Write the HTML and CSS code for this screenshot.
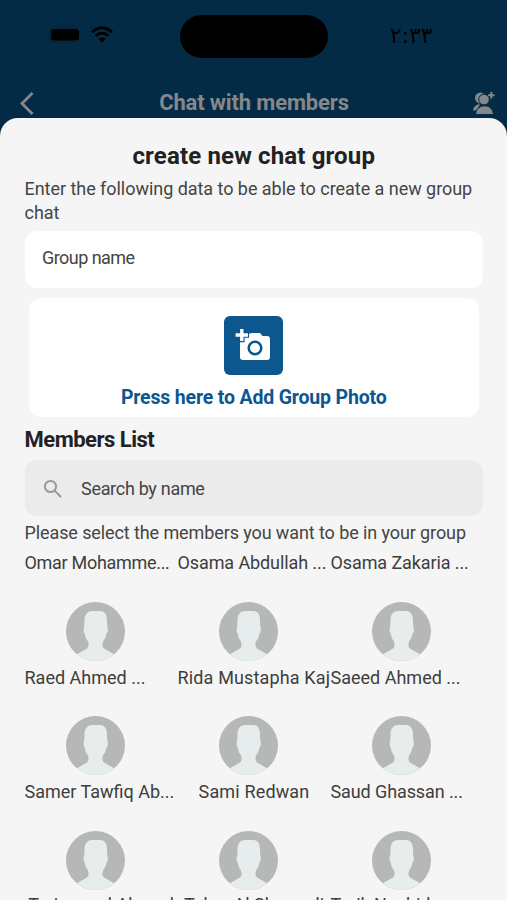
FILE: index.html
```html
<!DOCTYPE html>
<html lang="en">
<head>
<meta charset="utf-8">
<meta name="viewport" content="width=device-width, initial-scale=1">
<title>Create new chat group</title>
<link rel="stylesheet" href="styles.css">
</head>
<body>
<svg class="defs" width="0" height="0">
  <symbol id="avatar" viewBox="0 0 59 59">
    <circle cx="29.5" cy="29.5" r="29.5" fill="#b5b8b7"/>
    <path d="M11 52.300L21 46.500Q23.500 44.500 22 39.500Q19 36 18.700 31.500Q17.300 30.500 17.700 26Q18.500 25 18.500 18C18.500 12 22 9 26 9H34C38 9 41 12 41 18Q41 25 41.800 26Q42.200 30.500 40.500 31.500Q40 36 37 39.500Q35.500 44.500 38 46.500L48 52.300Q40 59 29.500 59T11 52.300Z" fill="#e7eded"/>
  </symbol>
</svg>
<div class="screen">
  <header class="top">
    <div class="status">
      <svg class="signals" width="110" height="24" viewBox="0 0 110 24">
        <rect x="3.500" y="3.500" width="31" height="17" rx="6" fill="#06243a"/>
        <rect x="6" y="6" width="28" height="11.500" rx="3.500" fill="#000"/>
        <path d="M1.300 10v4" stroke="#06243a" stroke-width="2"/>
        <g fill="none" stroke="#000" stroke-width="2.800">
          <path d="M47 9.300Q57 .300 67 9.300"/>
          <path d="M50.500 13Q57 7.200 63.500 13"/>
        </g>
        <path d="M53.200 15.800Q57 12.700 60.800 15.800L57 19.800Z" fill="#000"/>
        <path d="M78 17.500h28" stroke="#07223a" stroke-width="2" stroke-dasharray="3 4"/>
      </svg>
      <div class="island"></div>
      <div class="clock">٢:٣٣</div>
    </div>
    <div class="nav">
      <svg width="18" height="26" viewBox="0 0 18 26"><path d="M14.500 3L4 13.500 14.500 24" fill="none" stroke="#85888b" stroke-width="2.800"/></svg>
      <h1 class="nav-title">Chat with members</h1>
      <svg width="24" height="24" viewBox="0 0 24 24">
        <g fill="#85888b">
          <circle cx="8.500" cy="7" r="5.500"/>
          <path d="M1 19.500Q1.500 14 8 13L5 19.500Z"/>
          <circle cx="12" cy="8.500" r="5.300" stroke="#042b45" stroke-width="1"/>
          <path d="M3.500 23.500Q4.500 14.800 12.500 14.800T21.500 23.500Z" stroke="#042b45" stroke-width="1"/>
          <path d="M18.300 1h2v2.300h2.200v2h-2.200v2.300h-2V5.300h-2.200v-2h2.200z"/>
        </g>
      </svg>
    </div>
  </header>
  <main class="sheet">
    <h2 class="title">create new chat group</h2>
    <p class="intro">Enter the following data to be able to create a new group chat</p>
    <div class="field"><span class="field-text">Group name</span></div>
    <div class="photo">
      <div class="photo-button">
        <svg width="59" height="59" viewBox="0 0 59 59">
          <path d="M19 17.500H26L27.500 17H36L38.500 20H43Q46 20 46 23V41Q46 44 43 44H19Q16 44 16 41V19Z" fill="#fff"/>
          <path d="M15 11.700h5.600v4.500h4.500v5.600h-4.500v4.500H15v-4.500h-4.500v-5.600H15z" fill="#0b578e"/>
          <path d="M16.100 13h3.400v4.300H24v3.400h-4.500V25h-3.400v-4.300h-4.500v-3.400h4.500z" fill="#fff"/>
          <circle cx="31" cy="32" r="6.300" fill="#fff" stroke="#0b578e" stroke-width="2.500"/>
        </svg>
      </div>
      <span class="photo-label">Press here to Add Group Photo</span>
    </div>
    <h3 class="section">Members List</h3>
    <div class="search">
      <svg width="20" height="20" viewBox="0 0 20 20"><g fill="none" stroke="#999" stroke-width="2"><circle cx="7.500" cy="7.500" r="5.600"/><path d="M11.600 11.600L18 18"/></g></svg>
      <span class="search-text">Search by name</span>
    </div>
    <p class="hint">Please select the members you want to be in your group</p>
    <div class="members">
      <div class="member"><span class="name tight-2">Omar Mohamme...</span><svg class="avatar"><use href="#avatar"/></svg></div>
      <div class="member"><span class="name tight-1">Osama Abdullah ...</span><svg class="avatar"><use href="#avatar"/></svg></div>
      <div class="member"><span class="name tight-1">Osama Zakaria ...</span><svg class="avatar"><use href="#avatar"/></svg></div>
      <div class="member"><span class="name">Raed Ahmed ...</span><svg class="avatar"><use href="#avatar"/></svg></div>
      <div class="member"><span class="name wide">Rida Mustapha Kaj</span><svg class="avatar"><use href="#avatar"/></svg></div>
      <div class="member"><span class="name">Saeed Ahmed ...</span><svg class="avatar"><use href="#avatar"/></svg></div>
      <div class="member"><span class="name">Samer Tawfiq Ab...</span><svg class="avatar"><use href="#avatar"/></svg></div>
      <div class="member"><span class="name wide centered">Sami Redwan</span><svg class="avatar"><use href="#avatar"/></svg></div>
      <div class="member"><span class="name tight-1">Saud Ghassan ...</span><svg class="avatar"><use href="#avatar"/></svg></div>
      <div class="member last"><span class="name centered">Tariq saad Ahmad</span></div>
      <div class="member last"><span class="name centered">Taher Al Shareedi</span></div>
      <div class="member last"><span class="name">Tarik Nashid</span></div>
    </div>
  </main>
</div>
</body>
</html>
```

FILE: styles.css
```css
* { box-sizing: border-box; }

body {
  margin: 0;
  background: #042b45;
  color: #444;
  font: 18px/24px Roboto, "Noto Sans", sans-serif;
}

h1, h2, h3, p { margin: 0; }
.defs { display: block; }

.screen {
  display: flex;
  flex-direction: column;
  height: 900px;
  overflow: hidden;
}

.top {
  flex: none;
  height: 118px;
}

.status {
  display: grid;
  grid-template-columns: 1fr 148px 1fr;
  align-items: center;
  height: 72px;
}

.signals { margin-left: 45px; margin-top: -2px; }

.island {
  height: 43px;
  border-radius: 22px;
  background: #000;
}

.clock {
  justify-self: center;
  margin-right: 12px;
  color: #000;
  direction: ltr;
  unicode-bidi: bidi-override;
  font: 22px/28px "DejaVu Sans", sans-serif;
  letter-spacing: 0.6px;
}

.nav {
  display: flex;
  align-items: center;
  justify-content: space-between;
  height: 62px;
  padding: 0 11px 0 18px;
}

.nav-title {
  color: #85888b;
  font-size: 22px;
  letter-spacing: -0.15px;
}

.sheet {
  flex: none;
  height: 782px;
  position: relative;
  padding: 22px 24px 0 24.5px;
  border-radius: 18px 18px 0 0;
  background: #f5f5f5;
}

.title {
  margin-bottom: 4px;
  color: #222;
  font-size: 24px;
  line-height: 33px;
  letter-spacing: 0.15px;
  text-align: center;
}

.intro {
  margin-right: -4px;
  line-height: 23.5px;
  letter-spacing: -0.04px;
}

.field {
  display: flex;
  align-items: center;
  height: 57px;
  margin-top: 7px;
  padding: 0 17.5px 4px;
  border-radius: 12px;
  background: #fff;
}

.field-text { letter-spacing: -0.55px; }

.photo {
  display: flex;
  flex-direction: column;
  align-items: center;
  height: 119px;
  margin: 10px 4px 0 4px;
  padding-top: 18px;
  border-radius: 12px;
  background: #fff;
}

.photo-button {
  width: 59px;
  height: 59px;
  border-radius: 6px;
  background: #0b578e;
}

.photo-label {
  margin-top: 11px;
  color: #0b578e;
  font-size: 19.5px;
  font-weight: 700;
  letter-spacing: -0.17px;
}

.section {
  margin: 8px 0 5px;
  color: #222;
  font-size: 22px;
  line-height: 30px;
  letter-spacing: -0.5px;
}

.search {
  display: flex;
  align-items: center;
  gap: 18px;
  height: 56px;
  padding: 1px 18.5px 0;
  border-radius: 12px;
  background: #ebebeb;
}

.search-text { letter-spacing: -0.3px; }

.hint {
  margin: 5px 0 6px;
  letter-spacing: -0.1px;
}

.members {
  display: grid;
  grid-template-columns: repeat(3, 153px);
  grid-auto-rows: 114.700px;
}

.member {
  display: flex;
  flex-direction: column;
}

.last { margin-top: -2px; }

.name {
  white-space: nowrap;
  color: #3d3d3d;
}

.tight-1 { letter-spacing: -0.1px; }
.tight-2 { letter-spacing: -0.3px; }
.wide { letter-spacing: 0.15px; }
.centered { align-self: center; }

.avatar {
  width: 59px;
  height: 59px;
  margin: 26.500px 0 0 41px;
}
```
